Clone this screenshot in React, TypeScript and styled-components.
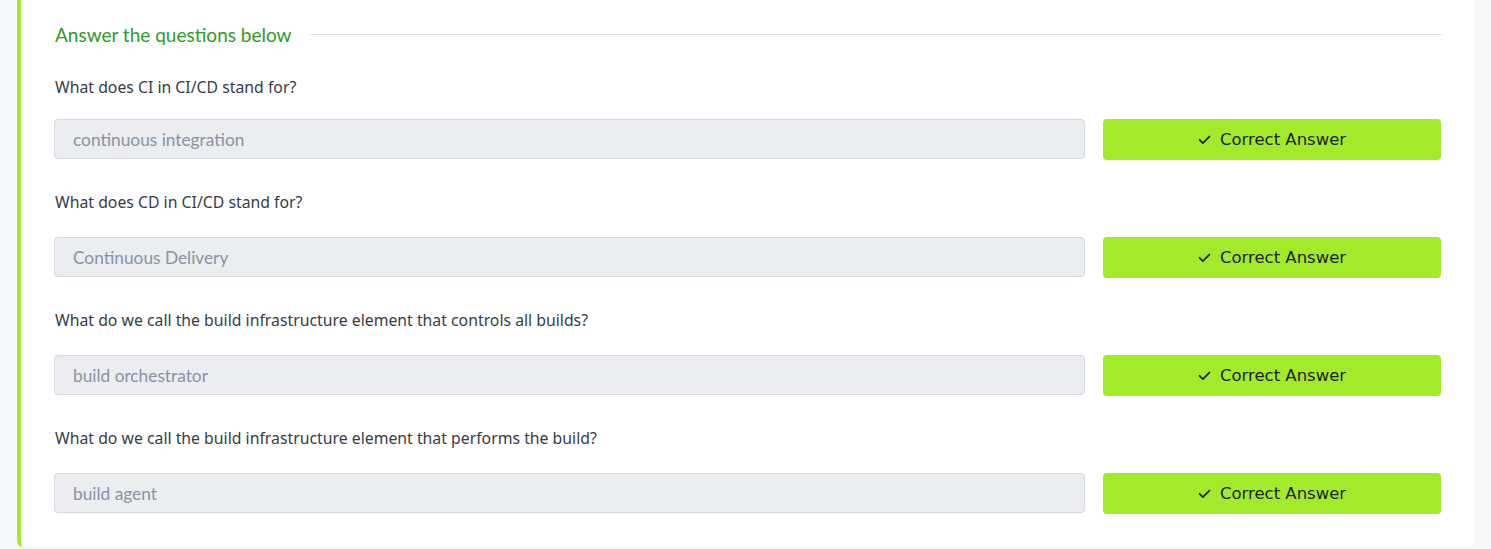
import React from "react";
import styled, { createGlobalStyle } from "styled-components";

const Global = createGlobalStyle`
  html, body { margin: 0; padding: 0; background: #f7f8fa; }
  body { font-family: Lato, "Noto Sans", sans-serif; }
`;

const Page = styled.div`
  width: 1491px;
  height: 549px;
  overflow: hidden;
  background: #f7f8fa;
`;

const Card = styled.section`
  margin-left: 17px;
  background: #ffffff;
  border-left: 4px solid #a3ea2a;
  border-radius: 0 0 6px 6px;
  padding: 23px 34px 33px 33px;
  box-sizing: content-box;
  width: 1387px;
`;

const HeadingRow = styled.div`
  display: flex;
  align-items: center;
  gap: 19px;
  margin-bottom: 28px;
`;

const Heading = styled.h3`
  margin: 0 0 0 1px;
  font-family: Lato, "Noto Sans", sans-serif;
  font-weight: 400;
  font-size: 19px;
  line-height: 24px;
  color: #2f9c1f;
  white-space: nowrap;
`;

const Rule = styled.div`
  flex: 1;
  height: 1px;
  background: #d3d8e0;
  margin-top: -2px;
`;

const Label = styled.p`
  margin: 0 0 23px 1px;
  font-family: "Noto Sans", Lato, sans-serif;
  font-size: 15.8px;
  line-height: 24px;
  color: #373c48;
`;

const Question = styled.div<{ $first?: boolean }>`
  margin-top: ${(p) => (p.$first ? "0" : "30px")};
  ${Label} {
    margin-bottom: ${(p) => (p.$first ? "20px" : "23px")};
  }
`;

const AnswerRow = styled.div`
  display: flex;
  gap: 18px;
  align-items: stretch;
`;

const Input = styled.div`
  flex: 1;
  box-sizing: border-box;
  height: 40px;
  background: #ebedf1;
  border: 1px solid #d5d9df;
  border-radius: 4px;
  padding: 0 18px;
  display: flex;
  align-items: center;
  font-size: 17.3px;
  color: #8a93a4;
`;

const Button = styled.button`
  width: 338px;
  height: 41px;
  border: none;
  border-radius: 4px;
  background: #a3ea2a;
  color: #1d2430;
  font-family: "DejaVu Sans", "Noto Sans", sans-serif;
  font-size: 16.5px;
  display: flex;
  align-items: center;
  justify-content: center;
  gap: 9px;
  padding: 0;
  cursor: pointer;
`;

const Check = () => (
  <svg width="13" height="13" viewBox="0 0 24 24" fill="none" stroke="#1d2430" strokeWidth="3.2" strokeLinecap="round" strokeLinejoin="round">
    <path d="M3 12.5l6 6L21 6.5" />
  </svg>
);

const items = [
  { q: "What does CI in CI/CD stand for?", a: "continuous integration" },
  { q: "What does CD in CI/CD stand for?", a: "Continuous Delivery" },
  { q: "What do we call the build infrastructure element that controls all builds?", a: "build orchestrator" },
  { q: "What do we call the build infrastructure element that performs the build?", a: "build agent" },
];

export default function App() {
  return (
    <Page>
      <Global />
      <Card>
        <HeadingRow>
          <Heading>Answer the questions below</Heading>
          <Rule />
        </HeadingRow>
        {items.map((it, i) => (
          <Question key={i} $first={i === 0}>
            <Label>{it.q}</Label>
            <AnswerRow>
              <Input>{it.a}</Input>
              <Button>
                <Check />
                Correct Answer
              </Button>
            </AnswerRow>
          </Question>
        ))}
      </Card>
    </Page>
  );
}
